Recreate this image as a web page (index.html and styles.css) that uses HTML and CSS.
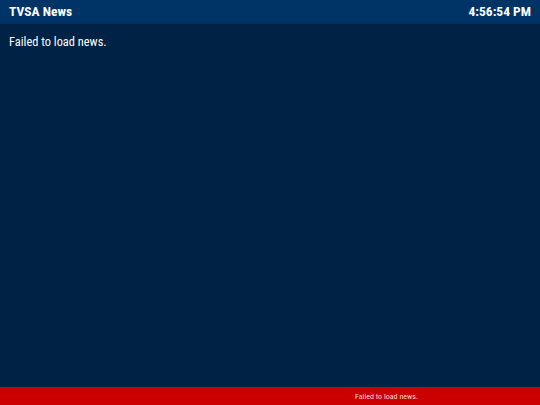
FILE: index.html
```html
<!DOCTYPE html>
<html>
<head>
<meta charset="utf-8">
<link rel="stylesheet" href="styles.css">
</head>
<body>
<div class="screen">
  <header class="topbar">
    <span class="title">TVSA News</span>
    <span class="clock">4:56:54 PM</span>
  </header>
  <main class="content">
    <p class="message">Failed to load news.</p>
  </main>
  <footer class="ticker">
    <span class="ticker-text">Failed to load news.</span>
  </footer>
</div>
</body>
</html>
```
FILE: styles.css
```css
html, body {
  margin: 0;
  padding: 0;
  height: 100%;
}
body {
  background: #002244;
  font-family: "Roboto Condensed", Roboto, "Liberation Sans", sans-serif;
  font-stretch: condensed;
  color: #ffffff;
}
.screen {
  display: flex;
  flex-direction: column;
  height: 405px;
  width: 540px;
}
.topbar {
  height: 24px;
  flex: 0 0 24px;
  box-sizing: border-box;
  background: #003366;
  border-bottom: 2px solid #00305f;
  display: flex;
  align-items: center;
  justify-content: space-between;
  padding: 0 9px;
  font-weight: bold;
  font-size: 13.5px;
}
.content {
  flex: 1;
  padding: 10px 9px;
}
.message {
  margin: 0;
  font-size: 12.4px;
  line-height: 16px;
}
.ticker {
  flex: 0 0 18px;
  background: #cc0000;
  display: flex;
  align-items: center;
  padding-left: 355px;
  font-size: 8px;
  color: #ffd6d6;
}
```
